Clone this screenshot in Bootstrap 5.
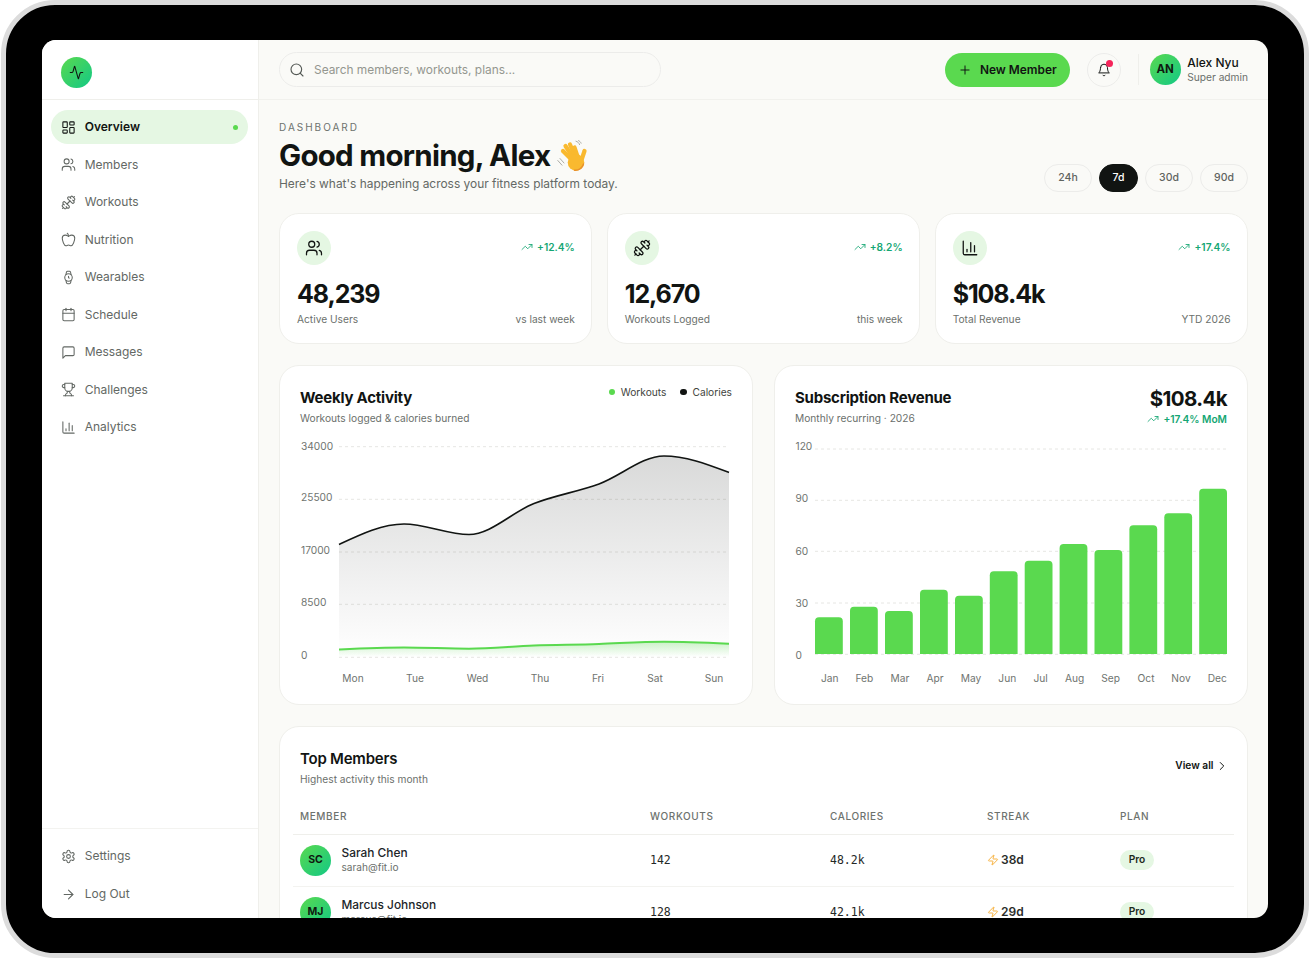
<!DOCTYPE html>
<html lang="en">

<head>
    <meta charset="UTF-8">
    <meta name="viewport" content="width=device-width, initial-scale=1.0">
    <title>Fitness Dashboard</title>
    <link href="https://cdn.jsdelivr.net/npm/bootstrap@5.3.2/dist/css/bootstrap.min.css" rel="stylesheet">
    <style>
        :root {
            --lime: #5ad94f;
            --lime-soft: #e5f7e3;
            --ink: #111412;
            --muted: #6b706c;
            --line: #efefeb;
            --paper: #fafaf7;
            --up: #14a673;
        }

        body {
            background: #fff;
            font-family: Inter, "Liberation Sans", sans-serif;
            color: var(--ink);
            overflow: hidden;
        }

        .device-frame {
            width: 1308px;
            height: 958px;
            margin-left: 1px;
            padding: 35px 36px;
            background: #000;
            border: 5px solid #dcdcdc;
            border-radius: 54px;
        }

        .device-screen {
            height: 878px;
            border-radius: 14px;
            overflow: hidden;
            background: var(--paper);
        }

        .ico {
            fill: none;
            stroke: currentColor;
            stroke-width: 1.7;
            stroke-linecap: round;
            stroke-linejoin: round;
            flex-shrink: 0;
        }

        .bg-lime { background: var(--lime); }
        .bg-ink { background: var(--ink); }

        /* sidebar */
        .side-rail {
            width: 217px;
            flex-shrink: 0;
            background: #fff;
            border-right: 1px solid var(--line);
        }

        .rail-brand {
            height: 60px;
            padding: 17px 0 0 19px;
            border-bottom: 1px solid var(--line);
        }

        .logo-dot,
        .person-dot {
            background: linear-gradient(135deg, #5ad94f, #12c885);
        }

        .logo-dot {
            width: 31px;
            height: 31px;
            color: var(--ink);
        }

        .rail-nav {
            padding: 10px 10px 0 8.5px;
            gap: 3.5px;
        }

        .rail-nav .nav-link,
        .rail-foot .nav-link {
            height: 34px;
            padding: 0 10px;
            gap: 9.2px;
            font-size: 12px;
            color: #636864;
            border-radius: 17px;
        }

        .rail-nav .nav-link.active {
            background: var(--lime-soft);
            color: var(--ink);
            font-weight: 600;
        }

        .live-dot {
            width: 5px;
            height: 5px;
            background: var(--lime);
        }

        .rail-foot {
            padding: 10px 10px 7px 8.5px;
            gap: 4px;
            border-top: 1px solid #f3f3f0;
        }

        /* top bar */
        .top-strip {
            height: 60px;
            padding: 0 20px;
            flex-shrink: 0;
            border-bottom: 1px solid #f1f1ed;
        }

        .find-box {
            width: 382px;
            height: 35px;
        }

        .find-box .form-control {
            height: 35px;
            padding: 0 12px 0 34px;
            font-size: 11.9px;
            background: var(--paper);
            border: 1px solid #ececea;
            border-radius: 18px;
            color: var(--ink);
        }

        .find-box .form-control::placeholder {
            color: #94978f;
        }

        .find-box .ico {
            position: absolute;
            left: 9.5px;
            top: 9.5px;
            z-index: 1;
            color: #555a56;
        }

        .add-btn {
            height: 34px;
            padding: 0 13px;
            gap: 7.5px;
            background: var(--lime);
            border: 0;
            border-radius: 17px;
            color: var(--ink);
            font-size: 11.9px;
            font-weight: 600;
        }

        .bell-btn {
            width: 34px;
            height: 34px;
            padding: 0;
            margin-left: 17px;
            border: 1px solid #ececea;
            border-radius: 50%;
            color: var(--ink);
        }

        .bell-dot {
            position: absolute;
            top: 6px;
            right: 6.5px;
            width: 7px;
            height: 7px;
            background: #f5245a;
        }

        .strip-sep {
            width: 1px;
            height: 31px;
            margin: 0 10.5px 0 17.5px;
            background: #efefeb;
        }

        .person-dot {
            width: 31px;
            height: 31px;
            font-size: 11.5px;
            font-weight: 700;
            color: #0f1a10;
        }

        .who-block {
            margin-left: 6.5px;
        }

        .who-name {
            font-size: 12px;
            font-weight: 500;
            line-height: 15px;
        }

        .who-role {
            font-size: 10.2px;
            line-height: 15px;
            color: var(--muted);
        }

        /* content */
        .page-body {
            padding: 21px 20px 0;
            min-height: 0;
            overflow: hidden;
        }

        .eyebrow {
            font-size: 10px;
            line-height: 13px;
            letter-spacing: .2em;
            color: #6d726e;
        }

        .hello {
            font-size: 29.5px;
            line-height: 42px;
            font-weight: 700;
            letter-spacing: -.025em;
            margin: 0;
        }

        .hello svg {
            vertical-align: -6px;
        }

        .hello-sub {
            font-size: 11.93px;
            line-height: 16px;
            color: #646965;
            margin: 0;
        }

        .range-row {
            gap: 7px;
        }

        .range-pill {
            height: 28px;
            width: 48px;
            padding: 0;
            font-size: 10.5px;
            font-weight: 500;
            color: #5f645f;
            background: transparent;
            border: 1px solid #ececea;
            border-radius: 14px;
        }

        .range-pill.on {
            width: 39px;
            background: var(--ink);
            border-color: var(--ink);
            color: #fff;
        }

        .kpi-grid {
            display: grid;
            grid-template-columns: repeat(3, 1fr);
            gap: 14.5px;
            margin-top: 21px;
        }

        .sheet {
            background: #fff;
            border: 1px solid var(--line);
            border-radius: 20px;
        }

        .kpi-sheet {
            height: 131px;
            padding: 17px 16.5px 17px 17px;
        }

        .kpi-sheet .trend {
            margin-top: -2px;
        }

        .kpi-bubble {
            width: 34px;
            height: 34px;
            background: var(--lime-soft);
        }

        .trend {
            gap: 4px;
            font-size: 10.2px;
            line-height: 14px;
            font-weight: 600;
            color: var(--up);
        }

        .kpi-num {
            margin-top: 13px;
            font-size: 25px;
            line-height: 32px;
            font-weight: 700;
            letter-spacing: -.045em;
        }

        .kpi-foot {
            margin-top: 2px;
            font-size: 10.2px;
            line-height: 14px;
            color: var(--muted);
        }

        .chart-grid {
            display: grid;
            grid-template-columns: 1fr 1fr;
            gap: 21px;
            margin-top: 21px;
        }

        .chart-sheet {
            height: 340px;
            padding: 21px 20px 0;
        }

        .chart-head {
            height: 39px;
        }

        .sheet-title {
            font-size: 15px;
            line-height: 22px;
            font-weight: 700;
            letter-spacing: -.015em;
            margin: 0;
        }

        .sheet-sub {
            font-size: 10.2px;
            line-height: 14px;
            margin-top: 2px;
            color: var(--muted);
        }

        .key-row {
            gap: 14px;
            font-size: 10.2px;
            color: #3f4440;
            margin-top: -2.5px;
        }

        .key-dot {
            width: 6.5px;
            height: 6.5px;
            margin-right: 5.5px;
        }

        .big-sum {
            font-size: 20.5px;
            line-height: 26px;
            font-weight: 700;
            letter-spacing: -.03em;
            margin-top: -1px;
        }

        .plot {
            display: block;
            width: 432px;
            height: 254px;
            margin-top: 10px;
        }

        .plot text {
            font-size: 10.2px;
            fill: #6f7470;
            dominant-baseline: central;
        }

        .grid-rule {
            stroke: #e6e6e3;
            stroke-dasharray: 3 3;
        }

        .members-sheet {
            margin-top: 21px;
            height: 300px;
            padding: 21px 13px 0;
        }

        .members-head {
            padding: 0 7px;
        }

        .members-head .sheet-title {
            font-weight: 600;
        }

        .view-all {
            gap: 1.5px;
            font-size: 10.2px;
            font-weight: 600;
            color: var(--ink);
            text-decoration: none;
            margin: 10px -2px 0 0;
        }

        .member-table {
            --bs-table-bg: transparent;
            table-layout: fixed;
            margin: 23.5px 0 0;
        }

        .col-member { width: 350px; }
        .col-workouts { width: 180px; }
        .col-calories { width: 157px; }
        .col-streak { width: 133px; }

        .member-table th {
            padding: 0 7px 11px;
            font-size: 10px;
            line-height: 13px;
            font-weight: 500;
            letter-spacing: .06em;
            color: #6d726e;
            border-bottom: 1px solid #efefeb;
        }

        .member-table td {
            height: 52px;
            padding: 0 7px;
            vertical-align: middle;
            border-bottom: 1px solid #f3f3f0;
            font-size: 12px;
        }

        .member-table .num-cell {
            padding-top: 2px;
            font-family: "DejaVu Sans Mono", "Liberation Mono", monospace;
            font-size: 11.5px;
            color: #252825;
        }

        .member-cell {
            gap: 10.5px;
        }

        .member-cell .person-dot {
            font-size: 10.5px;
        }

        .member-name {
            margin-top: -2px;
            font-size: 11.9px;
            line-height: 15px;
            font-weight: 500;
        }

        .member-mail {
            font-size: 10.1px;
            line-height: 14px;
            color: var(--muted);
        }

        .streak {
            gap: 2px;
            font-weight: 600;
            color: #2a2d2a;
        }

        .streak .ico {
            color: #f5a623;
        }

        .plan-chip {
            height: 20px;
            width: 34px;
            vertical-align: middle;
            font-size: 10.2px;
            font-weight: 600;
            background: var(--lime-soft);
            color: #1d2a1d;
        }
    </style>
</head>

<body>
    <!-- icon sprite -->
    <svg width="0" height="0" class="position-absolute">
        <symbol id="i-activity" viewBox="0 0 24 24"><path d="M22 12h-2.48a2 2 0 0 0-1.93 1.46l-2.35 8.36a.25.25 0 0 1-.48 0L9.24 2.18a.25.25 0 0 0-.48 0l-2.35 8.36A2 2 0 0 1 4.49 12H2"/></symbol>
        <symbol id="i-dash" viewBox="0 0 24 24"><rect x="3" y="3" width="7" height="9" rx="1"/><rect x="14" y="3" width="7" height="5" rx="1"/><rect x="14" y="12" width="7" height="9" rx="1"/><rect x="3" y="16" width="7" height="5" rx="1"/></symbol>
        <symbol id="i-users" viewBox="0 0 24 24"><path d="M16 21v-2a4 4 0 0 0-4-4H6a4 4 0 0 0-4 4v2"/><circle cx="9" cy="7" r="4"/><path d="M22 21v-2a4 4 0 0 0-3-3.87"/><path d="M16 3.13a4 4 0 0 1 0 7.75"/></symbol>
        <symbol id="i-dumbbell" viewBox="0 0 24 24"><g transform="matrix(-1 0 0 1 24 0)"><path d="M14.4 14.4 9.6 9.6"/><path d="M18.657 21.485a2 2 0 1 1-2.829-2.828l-1.767 1.768a2 2 0 1 1-2.829-2.829l6.364-6.364a2 2 0 1 1 2.829 2.829l-1.768 1.767a2 2 0 1 1 2.828 2.829z"/><path d="m21.5 21.5-1.4-1.4"/><path d="M3.9 3.9 2.5 2.5"/><path d="M6.404 12.768a2 2 0 1 1-2.829-2.829l1.768-1.767a2 2 0 1 1-2.828-2.829l2.828-2.828a2 2 0 1 1 2.829 2.828l1.767-1.768a2 2 0 1 1 2.829 2.829z"/></g></symbol>
        <symbol id="i-apple" viewBox="0 0 24 24"><path d="M12 20.94c1.5 0 2.75 1.06 4 1.06 3 0 6-8 6-12.22A4.91 4.91 0 0 0 17 5c-2.22 0-4 1.44-5 2-1-.56-2.78-2-5-2a4.9 4.9 0 0 0-5 4.78C2 14 5 22 8 22c1.25 0 2.5-1.06 4-1.06Z"/><path d="M10 2c1 .5 2 2 2 5"/></symbol>
        <symbol id="i-watch" viewBox="0 0 24 24"><circle cx="12" cy="12" r="6"/><polyline points="12 10 12 12 13 13"/><path d="m16.13 7.66-.81-4.05a2 2 0 0 0-2-1.61h-2.68a2 2 0 0 0-2 1.61l-.78 4.05"/><path d="m7.88 16.36.8 4a2 2 0 0 0 2 1.61h2.72a2 2 0 0 0 2-1.61l.81-4.05"/></symbol>
        <symbol id="i-calendar" viewBox="0 0 24 24"><path d="M8 2v4"/><path d="M16 2v4"/><rect x="3" y="4" width="18" height="18" rx="2"/><path d="M3 10h18"/></symbol>
        <symbol id="i-message" viewBox="0 0 24 24"><path d="M21 15a2 2 0 0 1-2 2H7l-4 4V5a2 2 0 0 1 2-2h14a2 2 0 0 1 2 2z"/></symbol>
        <symbol id="i-trophy" viewBox="0 0 24 24"><path d="M6 9H4.5a2.5 2.5 0 0 1 0-5H6"/><path d="M18 9h1.5a2.5 2.5 0 0 0 0-5H18"/><path d="M4 22h16"/><path d="M10 14.66V17c0 .55-.47.98-.97 1.21C7.85 18.75 7 20.24 7 22"/><path d="M14 14.66V17c0 .55.47.98.97 1.21C16.15 18.75 17 20.24 17 22"/><path d="M18 2H6v7a6 6 0 0 0 12 0V2Z"/></symbol>
        <symbol id="i-chart" viewBox="0 0 24 24"><path d="M3 3v16a2 2 0 0 0 2 2h16"/><path d="M18 17V9"/><path d="M13 17V5"/><path d="M8 17v-3"/></symbol>
        <symbol id="i-gear" viewBox="0 0 24 24"><path d="M12.22 2h-.44a2 2 0 0 0-2 2v.18a2 2 0 0 1-1 1.73l-.43.25a2 2 0 0 1-2 0l-.15-.08a2 2 0 0 0-2.73.73l-.22.38a2 2 0 0 0 .73 2.73l.15.1a2 2 0 0 1 1 1.72v.51a2 2 0 0 1-1 1.74l-.15.09a2 2 0 0 0-.73 2.73l.22.38a2 2 0 0 0 2.73.73l.15-.08a2 2 0 0 1 2 0l.43.25a2 2 0 0 1 1 1.73V20a2 2 0 0 0 2 2h.44a2 2 0 0 0 2-2v-.18a2 2 0 0 1 1-1.73l.43-.25a2 2 0 0 1 2 0l.15.08a2 2 0 0 0 2.73-.73l.22-.39a2 2 0 0 0-.73-2.73l-.15-.08a2 2 0 0 1-1-1.74v-.5a2 2 0 0 1 1-1.74l.15-.09a2 2 0 0 0 .73-2.73l-.22-.38a2 2 0 0 0-2.73-.73l-.15.08a2 2 0 0 1-2 0l-.43-.25a2 2 0 0 1-1-1.73V4a2 2 0 0 0-2-2z"/><circle cx="12" cy="12" r="3"/></symbol>
        <symbol id="i-arrow" viewBox="0 0 24 24"><path d="M5 12h14"/><path d="m12 5 7 7-7 7"/></symbol>
        <symbol id="i-search" viewBox="0 0 24 24"><circle cx="11" cy="11" r="8"/><path d="m21 21-4.3-4.3"/></symbol>
        <symbol id="i-plus" viewBox="0 0 24 24"><path d="M5 12h14"/><path d="M12 5v14"/></symbol>
        <symbol id="i-bell" viewBox="0 0 24 24"><path d="M6 8a6 6 0 0 1 12 0c0 7 3 9 3 9H3s3-2 3-9"/><path d="M10.3 21a1.94 1.94 0 0 0 3.4 0"/></symbol>
        <symbol id="i-trend" viewBox="0 0 24 24"><polyline points="22 7 13.5 15.5 8.5 10.5 2 17"/><polyline points="16 7 22 7 22 13"/></symbol>
        <symbol id="i-zap" viewBox="0 0 24 24"><path d="M4 14a1 1 0 0 1-.78-1.63l9.9-10.2a.5.5 0 0 1 .86.46l-1.92 6.02A1 1 0 0 0 13 10h7a1 1 0 0 1 .78 1.63l-9.9 10.2a.5.5 0 0 1-.86-.46l1.92-6.02A1 1 0 0 0 11 14z"/></symbol>
        <symbol id="i-chevron" viewBox="0 0 24 24"><path d="m9 18 6-6-6-6"/></symbol>
    </svg>

    <div class="device-frame">
        <div class="device-screen d-flex">

            <!-- Sidebar -->
            <aside class="side-rail d-flex flex-column">
                <div class="rail-brand">
                    <span class="logo-dot rounded-circle d-flex align-items-center justify-content-center">
                        <svg class="ico" width="15" height="15"><use href="#i-activity"/></svg>
                    </span>
                </div>
                <nav class="nav flex-column rail-nav flex-grow-1">
                    <a class="nav-link active d-flex align-items-center" href="#"><svg class="ico" width="15" height="15"><use href="#i-dash"/></svg>Overview<span class="live-dot rounded-circle ms-auto"></span></a>
                    <a class="nav-link d-flex align-items-center" href="#"><svg class="ico" width="15" height="15"><use href="#i-users"/></svg>Members</a>
                    <a class="nav-link d-flex align-items-center" href="#"><svg class="ico" width="15" height="15"><use href="#i-dumbbell"/></svg>Workouts</a>
                    <a class="nav-link d-flex align-items-center" href="#"><svg class="ico" width="15" height="15"><use href="#i-apple"/></svg>Nutrition</a>
                    <a class="nav-link d-flex align-items-center" href="#"><svg class="ico" width="15" height="15"><use href="#i-watch"/></svg>Wearables</a>
                    <a class="nav-link d-flex align-items-center" href="#"><svg class="ico" width="15" height="15"><use href="#i-calendar"/></svg>Schedule</a>
                    <a class="nav-link d-flex align-items-center" href="#"><svg class="ico" width="15" height="15"><use href="#i-message"/></svg>Messages</a>
                    <a class="nav-link d-flex align-items-center" href="#"><svg class="ico" width="15" height="15"><use href="#i-trophy"/></svg>Challenges</a>
                    <a class="nav-link d-flex align-items-center" href="#"><svg class="ico" width="15" height="15"><use href="#i-chart"/></svg>Analytics</a>
                </nav>
                <nav class="nav flex-column rail-foot">
                    <a class="nav-link d-flex align-items-center" href="#"><svg class="ico" width="15" height="15"><use href="#i-gear"/></svg>Settings</a>
                    <a class="nav-link d-flex align-items-center" href="#"><svg class="ico" width="15" height="15"><use href="#i-arrow"/></svg>Log Out</a>
                </nav>
            </aside>

            <div class="flex-grow-1 d-flex flex-column overflow-hidden">
                <!-- Top bar -->
                <header class="top-strip d-flex align-items-center">
                    <div class="find-box position-relative">
                        <svg class="ico" width="16" height="16"><use href="#i-search"/></svg>
                        <input class="form-control" type="text" placeholder="Search members, workouts, plans...">
                    </div>
                    <button class="btn add-btn d-flex align-items-center ms-auto"><svg class="ico" width="14" height="14"><use href="#i-plus"/></svg>New Member</button>
                    <button class="btn bell-btn position-relative d-flex align-items-center justify-content-center">
                        <svg class="ico" width="14" height="14"><use href="#i-bell"/></svg>
                        <span class="bell-dot rounded-circle"></span>
                    </button>
                    <span class="strip-sep"></span>
                    <span class="person-dot rounded-circle d-flex align-items-center justify-content-center">AN</span>
                    <div class="who-block">
                        <div class="who-name">Alex Nyu</div>
                        <div class="who-role">Super admin</div>
                    </div>
                </header>

                <main class="page-body flex-grow-1">
                    <!-- Greeting -->
                    <div class="d-flex justify-content-between align-items-end">
                        <div>
                            <div class="eyebrow">DASHBOARD</div>
                            <h1 class="hello">Good morning, Alex
                                <svg width="32" height="32" viewBox="0 0 32 32">
                                    <g fill="none" stroke="#a3a39c" stroke-width=".9" stroke-linecap="round"><path d="M.8 20.500l4.200 4.700M3 18.500l4 4.500"/><path d="M19 1.200c1.800.5 3 1.700 3.600 3.400M21.500 .6c1.200.5 2.100 1.400 2.600 2.600"/></g>
                                    <g stroke="#f9b92f" stroke-width="4.200" stroke-linecap="round"><path d="M16 21 6 11"/><path d="M17 19 8.500 6"/><path d="M19 18 13 4.500"/><path d="M21 18 17.500 7.500"/><path d="M23.500 23 27.500 11"/></g>
                                    <circle cx="19" cy="22.500" r="8.300" fill="#f9b92f"/>
                                    <path d="M26.500 24c-1.500 4.300-5 6.500-9 6.200" fill="none" stroke="#e8912d" stroke-width="1.400" stroke-linecap="round"/>
                                </svg>
                            </h1>
                            <p class="hello-sub">Here's what's happening across your fitness platform today.</p>
                        </div>
                        <div class="range-row d-flex">
                            <button class="btn range-pill">24h</button>
                            <button class="btn range-pill on">7d</button>
                            <button class="btn range-pill">30d</button>
                            <button class="btn range-pill">90d</button>
                        </div>
                    </div>

                    <!-- KPI cards -->
                    <div class="kpi-grid">
                        <div class="sheet kpi-sheet">
                            <div class="d-flex justify-content-between align-items-center">
                                <span class="kpi-bubble rounded-circle d-flex align-items-center justify-content-center"><svg class="ico" width="18" height="18"><use href="#i-users"/></svg></span>
                                <span class="trend d-flex align-items-center"><svg class="ico" width="12" height="12"><use href="#i-trend"/></svg>+12.4%</span>
                            </div>
                            <div class="kpi-num">48,239</div>
                            <div class="kpi-foot d-flex justify-content-between"><span>Active Users</span><span>vs last week</span></div>
                        </div>
                        <div class="sheet kpi-sheet">
                            <div class="d-flex justify-content-between align-items-center">
                                <span class="kpi-bubble rounded-circle d-flex align-items-center justify-content-center"><svg class="ico" width="18" height="18"><use href="#i-dumbbell"/></svg></span>
                                <span class="trend d-flex align-items-center"><svg class="ico" width="12" height="12"><use href="#i-trend"/></svg>+8.2%</span>
                            </div>
                            <div class="kpi-num">12,670</div>
                            <div class="kpi-foot d-flex justify-content-between"><span>Workouts Logged</span><span>this week</span></div>
                        </div>
                        <div class="sheet kpi-sheet">
                            <div class="d-flex justify-content-between align-items-center">
                                <span class="kpi-bubble rounded-circle d-flex align-items-center justify-content-center"><svg class="ico" width="18" height="18"><use href="#i-chart"/></svg></span>
                                <span class="trend d-flex align-items-center"><svg class="ico" width="12" height="12"><use href="#i-trend"/></svg>+17.4%</span>
                            </div>
                            <div class="kpi-num">$108.4k</div>
                            <div class="kpi-foot d-flex justify-content-between"><span>Total Revenue</span><span>YTD 2026</span></div>
                        </div>
                    </div>

                    <!-- Charts -->
                    <div class="chart-grid">
                        <div class="sheet chart-sheet">
                            <div class="chart-head d-flex justify-content-between align-items-start">
                                <div>
                                    <h2 class="sheet-title">Weekly Activity</h2>
                                    <div class="sheet-sub">Workouts logged &amp; calories burned</div>
                                </div>
                                <div class="key-row d-flex">
                                    <span class="d-flex align-items-center"><i class="key-dot rounded-circle d-block bg-lime"></i>Workouts</span>
                                    <span class="d-flex align-items-center"><i class="key-dot rounded-circle d-block bg-ink"></i>Calories</span>
                                </div>
                            </div>
                            <svg class="plot" viewBox="300 436 432 254">
                                <defs>
                                    <linearGradient id="fadeInk" gradientUnits="userSpaceOnUse" x1="0" y1="456" x2="0" y2="657"><stop offset="0" stop-color="#111412" stop-opacity=".16"/><stop offset="1" stop-color="#111412" stop-opacity="0"/></linearGradient>
                                    <linearGradient id="fadeLime" gradientUnits="userSpaceOnUse" x1="0" y1="642" x2="0" y2="657"><stop offset="0" stop-color="#5ad94f" stop-opacity=".3"/><stop offset="1" stop-color="#5ad94f" stop-opacity="0"/></linearGradient>
                                </defs>
                                <g class="grid-rule">
                                    <path d="M339 446.7H729"/><path d="M339 499.3H729"/><path d="M339 552H729"/><path d="M339 604.3H729"/><path d="M339 657.3H729"/>
                                </g>
                                <path fill="url(#fadeInk)" d="M339 544.5C360.7 534.3 382.3 524 404 524C425.7 524 447.3 534.5 469 534.5C490.7 534.5 512.3 511.9 534 503.5C555.7 495.1 577.3 491.9 599 484C620.7 476.1 642.3 456 664 456C685.7 456 707.3 464.3 729 472.5V657.3H339Z"/>
                                <path fill="none" stroke="#111412" stroke-width="1.6" d="M339 544.5C360.7 534.3 382.3 524 404 524C425.7 524 447.3 534.5 469 534.5C490.7 534.5 512.3 511.9 534 503.5C555.7 495.1 577.3 491.9 599 484C620.7 476.1 642.3 456 664 456C685.7 456 707.3 464.3 729 472.5"/>
                                <path fill="url(#fadeLime)" d="M339 649.5C360.7 648.5 382.3 647.5 404 647.5C425.7 647.5 447.3 648.7 469 648.7C490.7 648.7 512.3 646.3 534 645.5C555.7 644.7 577.3 644.8 599 644C620.7 643.2 642.3 641.7 664 641.7C685.7 641.7 707.3 642.7 729 643.7V657.3H339Z"/>
                                <path fill="none" stroke="#5ad94f" stroke-width="2" d="M339 649.5C360.7 648.5 382.3 647.5 404 647.5C425.7 647.5 447.3 648.7 469 648.7C490.7 648.7 512.3 646.3 534 645.5C555.7 644.7 577.3 644.8 599 644C620.7 643.2 642.3 641.7 664 641.7C685.7 641.7 707.3 642.7 729 643.7"/>
                                <text x="301" y="445.5">34000</text>
                                <text x="301" y="497">25500</text>
                                <text x="301" y="549.7">17000</text>
                                <text x="301" y="602.3">8500</text>
                                <text x="301" y="655">0</text>
                                <g text-anchor="middle">
                                    <text x="353" y="678">Mon</text>
                                    <text x="415" y="678">Tue</text>
                                    <text x="477.5" y="678">Wed</text>
                                    <text x="540" y="678">Thu</text>
                                    <text x="598" y="678">Fri</text>
                                    <text x="655" y="678">Sat</text>
                                    <text x="714" y="678">Sun</text>
                                </g>
                            </svg>
                        </div>

                        <div class="sheet chart-sheet">
                            <div class="chart-head d-flex justify-content-between align-items-start">
                                <div>
                                    <h2 class="sheet-title">Subscription Revenue</h2>
                                    <div class="sheet-sub">Monthly recurring · 2026</div>
                                </div>
                                <div class="text-end">
                                    <div class="big-sum">$108.4k</div>
                                    <div class="trend d-flex align-items-center justify-content-end"><svg class="ico" width="12" height="12"><use href="#i-trend"/></svg>+17.4% MoM</div>
                                </div>
                            </div>
                            <svg class="plot" viewBox="795 436 432 254">
                                <g class="grid-rule">
                                    <path d="M815 449H1227"/><path d="M815 500.3H1227"/><path d="M815 551.3H1227"/><path d="M815 603H1227"/><path d="M815 654.3H1227"/>
                                </g>
                                <g fill="#5ad94f">
                                    <path d="M815 654V621.3a4 4 0 0 1 4-4H838.8a4 4 0 0 1 4 4V654Z"/>
                                    <path d="M850 654V610.7a4 4 0 0 1 4-4H873.8a4 4 0 0 1 4 4V654Z"/>
                                    <path d="M885 654V615a4 4 0 0 1 4-4H908.8a4 4 0 0 1 4 4V654Z"/>
                                    <path d="M920 654V593.7a4 4 0 0 1 4-4H943.8a4 4 0 0 1 4 4V654Z"/>
                                    <path d="M955 654V599.7a4 4 0 0 1 4-4H978.8a4 4 0 0 1 4 4V654Z"/>
                                    <path d="M989.8 654V575.3a4 4 0 0 1 4-4H1013.6a4 4 0 0 1 4 4V654Z"/>
                                    <path d="M1024.7 654V564.7a4 4 0 0 1 4-4H1048.5a4 4 0 0 1 4 4V654Z"/>
                                    <path d="M1059.6 654V548a4 4 0 0 1 4-4H1083.4a4 4 0 0 1 4 4V654Z"/>
                                    <path d="M1094.5 654V554a4 4 0 0 1 4-4H1118.3a4 4 0 0 1 4 4V654Z"/>
                                    <path d="M1129.4 654V529.3a4 4 0 0 1 4-4H1153.2a4 4 0 0 1 4 4V654Z"/>
                                    <path d="M1164.3 654V517.3a4 4 0 0 1 4-4H1188.1a4 4 0 0 1 4 4V654Z"/>
                                    <path d="M1199.2 654V492.7a4 4 0 0 1 4-4H1223a4 4 0 0 1 4 4V654Z"/>
                                </g>
                                <text x="795.5" y="446.3">120</text>
                                <text x="795.5" y="498">90</text>
                                <text x="795.5" y="550.7">60</text>
                                <text x="795.5" y="603">30</text>
                                <text x="795.5" y="655">0</text>
                                <g text-anchor="middle">
                                    <text x="829.7" y="678">Jan</text>
                                    <text x="864.3" y="678">Feb</text>
                                    <text x="900" y="678">Mar</text>
                                    <text x="935" y="678">Apr</text>
                                    <text x="971" y="678">May</text>
                                    <text x="1007.3" y="678">Jun</text>
                                    <text x="1040.7" y="678">Jul</text>
                                    <text x="1074.7" y="678">Aug</text>
                                    <text x="1110.7" y="678">Sep</text>
                                    <text x="1146" y="678">Oct</text>
                                    <text x="1181" y="678">Nov</text>
                                    <text x="1217.3" y="678">Dec</text>
                                </g>
                            </svg>
                        </div>
                    </div>

                    <!-- Members table -->
                    <div class="sheet members-sheet">
                        <div class="members-head d-flex justify-content-between align-items-start">
                            <div>
                                <h2 class="sheet-title">Top Members</h2>
                                <div class="sheet-sub">Highest activity this month</div>
                            </div>
                            <a class="view-all d-flex align-items-center" href="#">View all<svg class="ico" width="14" height="14"><use href="#i-chevron"/></svg></a>
                        </div>
                        <table class="table member-table">
                            <colgroup>
                                <col class="col-member"><col class="col-workouts"><col class="col-calories"><col class="col-streak"><col>
                            </colgroup>
                            <thead>
                                <tr><th>MEMBER</th><th>WORKOUTS</th><th>CALORIES</th><th>STREAK</th><th>PLAN</th></tr>
                            </thead>
                            <tbody>
                                <tr>
                                    <td>
                                        <div class="member-cell d-flex align-items-center">
                                            <span class="person-dot rounded-circle d-flex align-items-center justify-content-center">SC</span>
                                            <div><div class="member-name">Sarah Chen</div><div class="member-mail">sarah@fit.io</div></div>
                                        </div>
                                    </td>
                                    <td class="num-cell">142</td>
                                    <td class="num-cell">48.2k</td>
                                    <td><span class="streak d-flex align-items-center"><svg class="ico" width="12" height="12"><use href="#i-zap"/></svg>38d</span></td>
                                    <td><span class="plan-chip rounded-pill d-inline-flex align-items-center justify-content-center">Pro</span></td>
                                </tr>
                                <tr>
                                    <td>
                                        <div class="member-cell d-flex align-items-center">
                                            <span class="person-dot rounded-circle d-flex align-items-center justify-content-center">MJ</span>
                                            <div><div class="member-name">Marcus Johnson</div><div class="member-mail">marcus@fit.io</div></div>
                                        </div>
                                    </td>
                                    <td class="num-cell">128</td>
                                    <td class="num-cell">42.1k</td>
                                    <td><span class="streak d-flex align-items-center"><svg class="ico" width="12" height="12"><use href="#i-zap"/></svg>29d</span></td>
                                    <td><span class="plan-chip rounded-pill d-inline-flex align-items-center justify-content-center">Pro</span></td>
                                </tr>
                            </tbody>
                        </table>
                    </div>
                </main>
            </div>
        </div>
    </div>

    <script src="https://cdn.jsdelivr.net/npm/bootstrap@5.3.2/dist/js/bootstrap.bundle.min.js"></script>
</body>

</html>
